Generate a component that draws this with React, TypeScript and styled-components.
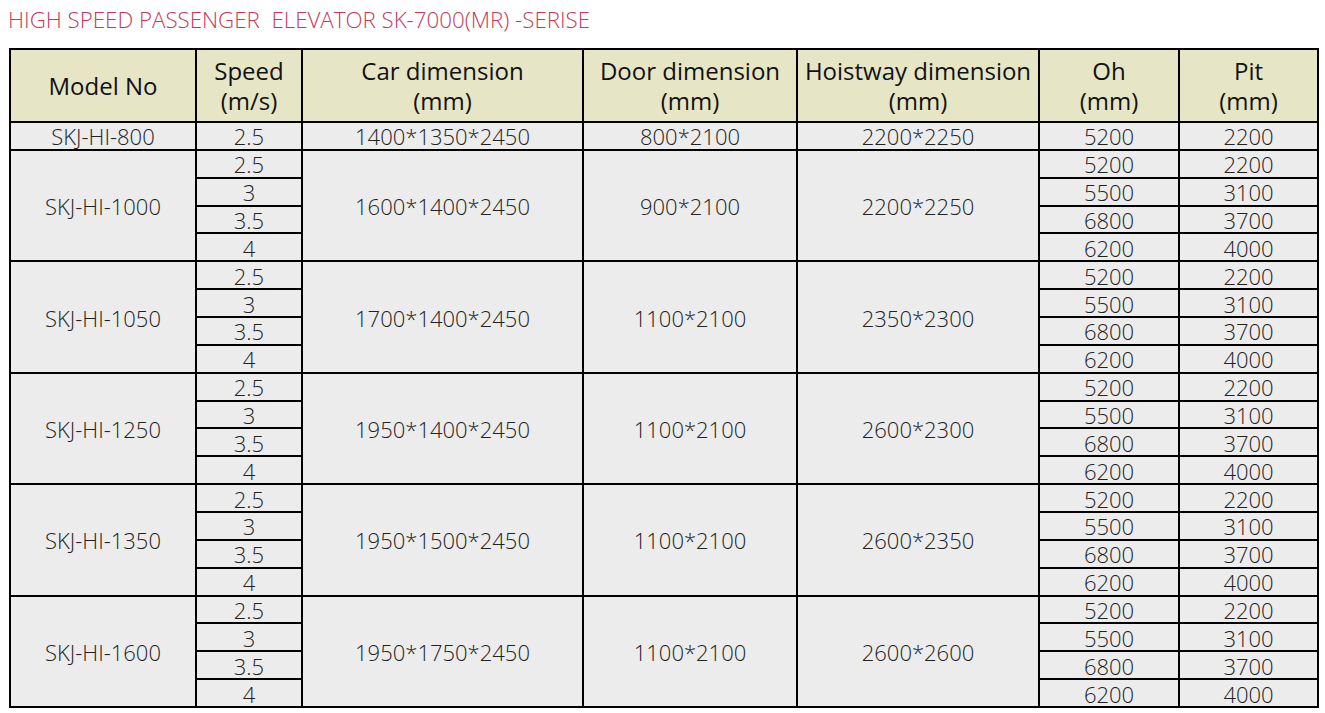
import React from "react";
import styled, { createGlobalStyle } from "styled-components";

type Group = {
  model: string;
  car: string;
  door: string;
  hoistway: string;
  rows: { speed: string; oh: string; pit: string }[];
};

const fourSpeeds = [
  { speed: "2.5", oh: "5200", pit: "2200" },
  { speed: "3", oh: "5500", pit: "3100" },
  { speed: "3.5", oh: "6800", pit: "3700" },
  { speed: "4", oh: "6200", pit: "4000" }
];

const groups: Group[] = [
  {
    model: "SKJ-HI-800",
    car: "1400*1350*2450",
    door: "800*2100",
    hoistway: "2200*2250",
    rows: [{ speed: "2.5", oh: "5200", pit: "2200" }]
  },
  { model: "SKJ-HI-1000", car: "1600*1400*2450", door: "900*2100", hoistway: "2200*2250", rows: fourSpeeds },
  { model: "SKJ-HI-1050", car: "1700*1400*2450", door: "1100*2100", hoistway: "2350*2300", rows: fourSpeeds },
  { model: "SKJ-HI-1250", car: "1950*1400*2450", door: "1100*2100", hoistway: "2600*2300", rows: fourSpeeds },
  { model: "SKJ-HI-1350", car: "1950*1500*2450", door: "1100*2100", hoistway: "2600*2350", rows: fourSpeeds },
  { model: "SKJ-HI-1600", car: "1950*1750*2450", door: "1100*2100", hoistway: "2600*2600", rows: fourSpeeds }
];

const columns = [
  { title: "Model No", unit: "", width: 186 },
  { title: "Speed", unit: "(m/s)", width: 106 },
  { title: "Car dimension", unit: "(mm)", width: 281 },
  { title: "Door dimension", unit: "(mm)", width: 214 },
  { title: "Hoistway dimension", unit: "(mm)", width: 242 },
  { title: "Oh", unit: "(mm)", width: 140 },
  { title: "Pit", unit: "(mm)", width: 139 }
];

export default function App() {
  return (
    <>
      <GlobalStyle />
      <Page>
        <Title>HIGH SPEED PASSENGER&nbsp; ELEVATOR SK-7000(MR) -SERISE</Title>
        <Table>
          <colgroup>
            {columns.map((c) => (
              <col key={c.title} style={{ width: c.width }} />
            ))}
          </colgroup>
          <thead>
            <HeadRow>
              {columns.map((c) => (
                <HeadCell key={c.title}>
                  <HeadLine>{c.title}</HeadLine>
                  {c.unit && <HeadLine>{c.unit}</HeadLine>}
                </HeadCell>
              ))}
            </HeadRow>
          </thead>
          <tbody>
            {groups.map((g) =>
              g.rows.map((r, i) => (
                <BodyRow key={g.model + i}>
                  {i === 0 && <Cell rowSpan={g.rows.length}>{g.model}</Cell>}
                  <Cell>{r.speed}</Cell>
                  {i === 0 && (
                    <>
                      <Cell rowSpan={g.rows.length}>{g.car}</Cell>
                      <Cell rowSpan={g.rows.length}>{g.door}</Cell>
                      <Cell rowSpan={g.rows.length}>{g.hoistway}</Cell>
                    </>
                  )}
                  <Cell>{r.oh}</Cell>
                  <Cell>{r.pit}</Cell>
                </BodyRow>
              ))
            )}
          </tbody>
        </Table>
      </Page>
    </>
  );
}

const GlobalStyle = createGlobalStyle`
  html, body {
    margin: 0;
    padding: 0;
    background: #ffffff;
  }
  body {
    font-family: "Open Sans", "Noto Sans", sans-serif;
  }
`;

const Page = styled.div`
  padding: 8px 0 0 8px;
  width: 1325px;
  height: 713px;
  box-sizing: border-box;
  overflow: hidden;
`;

const Title = styled.div`
  font-size: 22.3px;
  font-weight: 300;
  color: #c03a5a;
  line-height: 24px;
  margin: 0 0 16px 0;
  white-space: nowrap;
`;

const Table = styled.table`
  border-collapse: collapse;
  table-layout: fixed;
  width: 1308px;
  margin-left: 1px;
  border: 2px solid #000;
`;

const HeadRow = styled.tr`
  height: 73px;
  background: #e6e6c7;
`;

const HeadCell = styled.th`
  border: 2px solid #000;
  padding: 1px 0 0 0;
  font-weight: 400;
  font-size: 24px;
  color: #111;
  text-align: center;
  vertical-align: middle;
  white-space: nowrap;
`;

const HeadLine = styled.div`
  line-height: 30px;
  height: 30px;
`;

const BodyRow = styled.tr`
  height: 27.86px;
  background: #ececec;
`;

const Cell = styled.td`
  border: 2px solid #000;
  padding: 1px 0 0 0;
  font-size: 22px;
  font-weight: 300;
  line-height: 24px;
  color: #222;
  text-align: center;
  vertical-align: middle;
  white-space: nowrap;
`;
